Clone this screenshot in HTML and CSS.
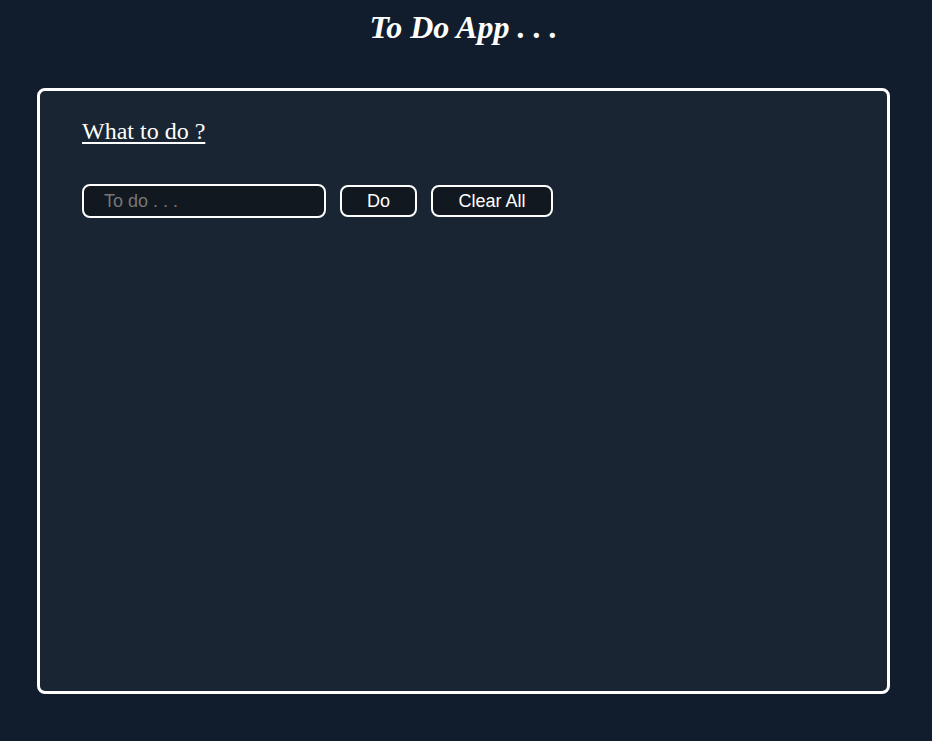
FILE: index.html
```html
<!DOCTYPE html>
<html>
<head>
<meta charset="utf-8">
<link rel="stylesheet" href="styles.css">
</head>
<body>
<h1 class="title">To Do App . . .</h1>
<main class="card">
  <h2 class="label">What to do ?</h2>
  <div class="row">
    <input class="field" type="text" placeholder="To do . . .">
    <button class="btn btn-do">Do</button>
    <button class="btn btn-clear">Clear All</button>
  </div>
</main>
</body>
</html>
```
FILE: styles.css
```css
html, body { margin: 0; padding: 0; }
body {
  background: #111d2c;
  font-family: "Liberation Serif", serif;
  color: #fff;
  height: 741px;
  overflow: hidden;
}
.title {
  margin: 0;
  padding: 9px 5px 0 0;
  text-align: center;
  font-size: 32px;
  font-style: italic;
  font-weight: bold;
  line-height: 37px;
}
.card {
  margin: 42px 42px 0 37px;
  height: 600px;
  border: 3px solid #fff;
  border-radius: 8px;
  background: #192532;
  padding: 0 42px;
  box-sizing: content-box;
}
.label {
  margin: 26px 0 0;
  font-size: 24px;
  font-weight: normal;
  text-decoration: underline;
  text-underline-offset: 3px;
  line-height: 28px;
}
.row {
  display: flex;
  align-items: center;
  gap: 14px;
  margin-top: 39px;
}
.field {
  width: 244px;
  height: 34px;
  box-sizing: border-box;
  border: 2px solid #fff;
  border-radius: 8px;
  background: #111820;
  color: #fff;
  font-family: "Liberation Sans", Arial, sans-serif;
  font-size: 18px;
  padding: 0 0 0 20px;
  outline: none;
}
.field::placeholder { color: #777; }
.btn {
  height: 32px;
  box-sizing: border-box;
  border: 2px solid #fff;
  border-radius: 8px;
  background: #111820;
  color: #fff;
  font-family: "Liberation Sans", Arial, sans-serif;
  font-size: 18px;
  padding: 0;
}
.btn-do { width: 77px; }
.btn-clear { width: 122px; }
```
